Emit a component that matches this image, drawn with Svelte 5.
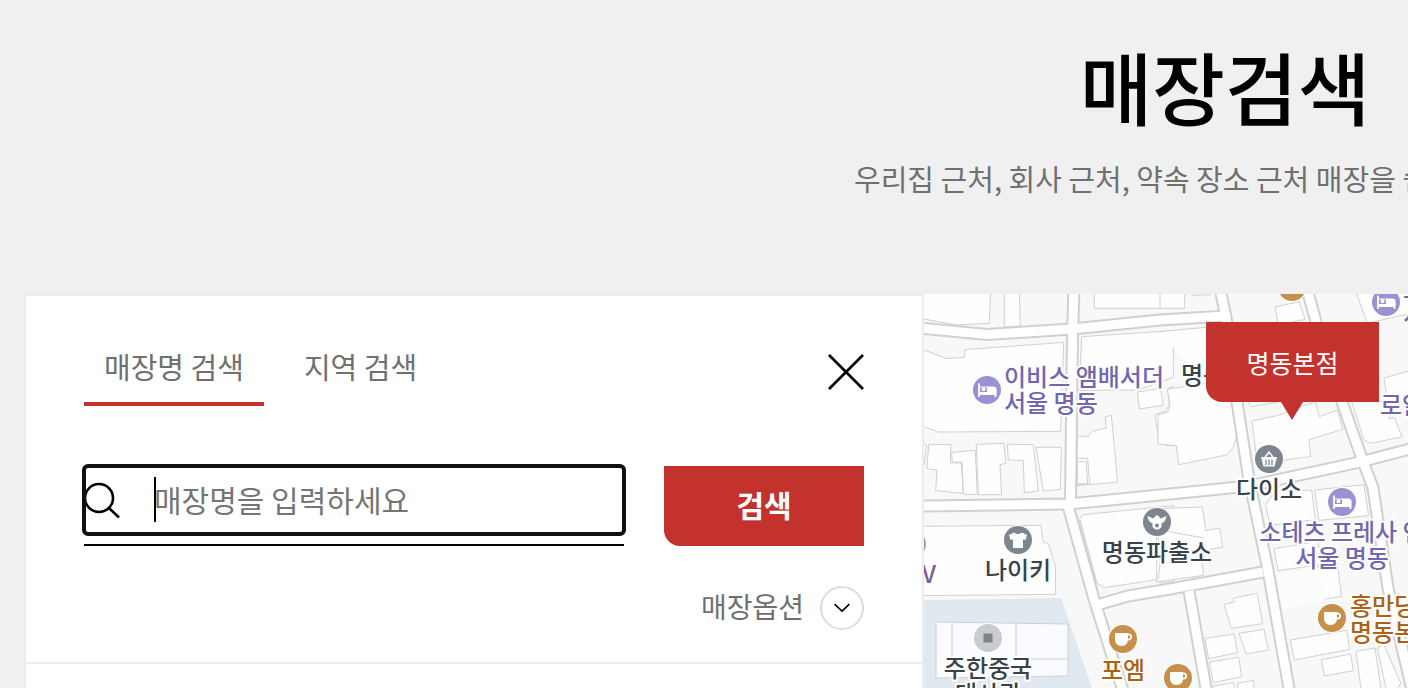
<script lang="ts">
	type Kind = 'bed' | 'basket' | 'shirt' | 'police' | 'cup' | 'square' | 'film';

	let keyword = $state('');
	let activeTab = $state(0);
	const tabs = ['매장명 검색', '지역 검색'];

	function focusOnMount(node: HTMLInputElement) {
		node.focus();
	}

	const roads = [
		'M0 34.5 63 40.5 148 35 236 26 302 22',
		'M150 -5 148.5 40 146.5 209',
		'M-5 212 145 210 196 205 246 200 325 192 436 168 490 154',
		'M296 -5 302 23 313 108 325 186 343 271 366 400',
		'M383 -5 392 28 418 108 437 162 449 194 464 294 488 396',
		'M144 212 170 305 200 400',
		'M173 311 204 302 246 295 339 278',
		'M265 297 283 400'
	];

	// building outlines, drawn at three units to the pixel
	const tiles = [
		{
			x: -4,
			y: -4,
			d: 'M0 85 110 105 208 100 212 0H0zM253 0V111L301 108 298 0zM523 0V55H760V0zM0 175 80 206 134 202V179L431 157 422 424 54 426 0 405zM0 462 20 465 12 525 0 522zM26 463 93 464 91 518 124 519 130 610 47 602 51 540 21 536zM95 487 166 481 172 614 130 612 126 517 97 516zM169 463 252 460 257 520 240 524 245 614H175zM262 463 340 464 355 603 313 608 310 511 265 510zM348 472 424 472 421 598 370 603zM485 140 760 122V262L655 300 478 301zM652 306 658 357 730 346 722 295zM760 290 743 296 748 340 740 362 705 374 718 462 760 468zM473 438 505 440 516 424 559 414 555 381 574 376 593 577 467 587zM470 504 503 506 509 582H470zM472 514 499 516 503 582H472z'
		},
		{
			x: 236,
			y: -4,
			d: 'M0 0V55H74V0zM97 0V16L152 14V0zM-4 125 140 112V280L22 298 30 345 24 366 -6 374V462L49 467 56 524 200 495 220 473 230 440 217 335 140 280M345 51 418 35 435 88 355 105zM590 12 622 100 750 70V0zM276 393 355 376 466 335 478 380 532 360 548 418 447 449 452 500 292 520zM265 335 274 350 355 336zM575 335 612 450 632 460 726 441 704 383 688 386 672 264 750 242V335z'
		},
		{
			x: -4,
			y: 194,
			d: 'M0 115 363 112 370 163 385 166 406 235 407 319 0 323zM478 95 490 80 710 58 760 53V280L722 285 710 275 554 299 530 285z'
		},
		{
			x: 236,
			y: 194,
			d: 'M-10 62 127 57 138 128 179 120 188 178 122 188 131 262 -10 282zM317 50 345 10 455 6 466 95 330 112zM464 6 477 97 626 83 612 -10zM342 182 475 160 482 230 354 248zM474 235 532 225 544 325 491 334zM192 350 223 342 221 330 291 316 308 407 214 421zM135 451 222 438 232 494 146 512zM237 436 312 424 325 486 258 498zM148 522 236 508 245 566 160 584zM391 456 560 427 569 484 403 516zM484 515 572 498 580 548 493 564zM588 490 645 480 664 610H604zM652 480 672 470 722 585 710 610H680zM160 594 220 584 225 610H163zM232 586 280 577 284 610H236z'
		}
	];

	const places: { kind: Kind; x: number; y: number; color: string }[] = [
		{ kind: 'bed', x: 63, y: 96, color: '#9a90d2' },
		{ kind: 'bed', x: 462, y: 8, color: '#9a90d2' },
		{ kind: 'bed', x: 418, y: 208, color: '#9a90d2' },
		{ kind: 'basket', x: 345, y: 165, color: '#7d868e' },
		{ kind: 'shirt', x: 94, y: 246, color: '#7d868e' },
		{ kind: 'police', x: 233, y: 228, color: '#7d868e' },
		{ kind: 'cup', x: 199, y: 345, color: '#c6904a' },
		{ kind: 'cup', x: 254, y: 384, color: '#c6904a' },
		{ kind: 'cup', x: 408, y: 324, color: '#c6904a' },
		{ kind: 'cup', x: 368, y: -7, color: '#c6904a' },
		{ kind: 'square', x: 64, y: 344, color: '#c9cbce' },
		{ kind: 'film', x: -12, y: 250, color: '#b68fc0' }
	];

	const labels = [
		{ x: 80, y: 92, lines: ['이비스 앰배서더', '서울 명동'], tone: 'hotel', anchor: 'start' },
		{ x: 479, y: 4, lines: ['스카이파크', '서울 명동'], tone: 'hotel', anchor: 'start' },
		{ x: 456, y: 120, lines: ['로얄호텔'], tone: 'hotel', anchor: 'start' },
		{ x: 418, y: 247, lines: ['소테츠 프레사 인', '서울 명동'], tone: 'hotel', anchor: 'middle' },
		{ x: 257, y: 90, lines: ['명동성당'], tone: 'plain', anchor: 'start' },
		{ x: 345, y: 204, lines: ['다이소'], tone: 'plain', anchor: 'middle' },
		{ x: 233, y: 267, lines: ['명동파출소'], tone: 'plain', anchor: 'middle' },
		{ x: 94, y: 285, lines: ['나이키'], tone: 'plain', anchor: 'middle' },
		{ x: 64, y: 383, lines: ['주한중국', '대사관'], tone: 'plain', anchor: 'middle' },
		{ x: 199, y: 385, lines: ['포엠'], tone: 'cafe', anchor: 'middle' },
		{ x: 426, y: 321, lines: ['홍만당', '명동본점'], tone: 'cafe', anchor: 'start' },
		{ x: 12, y: 289, lines: ['CGV'], tone: 'cinema', anchor: 'end' }
	];
</script>

<main class="page">
	<header class="page-head">
		<h1>매장검색</h1>
		<p>우리집 근처, 회사 근처, 약속 장소 근처 매장을 쉽게 찾아보세요.</p>
	</header>

	<div class="store">
		<section class="panel">
			<form class="search" onsubmit={(e) => e.preventDefault()}>
				<div class="panel-top">
					<div class="tabs">
						{#each tabs as tab, i}
							<button type="button" class="tab" class:active={activeTab === i} onclick={() => (activeTab = i)}>{tab}</button>
						{/each}
					</div>
					<button type="button" class="close" aria-label="닫기">
						<svg width="36" height="36" viewBox="0 0 36 36" fill="none" stroke="#000" stroke-width="2.700"><path d="M1 1 35 35M35 1 1 35" /></svg>
					</button>
				</div>

				<div class="search-row">
					<div class="field">
						<label class="field-box">
							<svg width="36" height="36" viewBox="0 0 36 36" fill="none" stroke="#000" stroke-width="2.600"><circle cx="15" cy="16" r="14" /><path d="M25 26 35 35.500" /></svg>
							<span class="entry">
								<input type="text" placeholder="매장명을 입력하세요" aria-label="매장명" bind:value={keyword} use:focusOnMount />
								{#if !keyword}<span class="caret"></span>{/if}
							</span>
						</label>
					</div>
					<button type="submit" class="submit">검색</button>
				</div>

				<button type="button" class="option">
					<span class="option-text">매장옵션</span>
					<span class="option-icon">
						<svg width="16" height="10" viewBox="0 0 16 10" fill="none" stroke="#000" stroke-width="1.600"><path d="m.6 1.200 7.400 7 7.400-7" /></svg>
					</span>
				</button>
			</form>
			<div class="results"></div>
		</section>

		<section class="map" aria-label="지도">
			<svg class="map-canvas" width="100%" height="100%">
				<path d="M0 306 137 304 170 400H0z" fill="#e0e8f0" />
				{#each tiles as tile}
					<path class="building" transform="translate({tile.x} {tile.y}) scale(.33333)" d={tile.d} />
				{/each}
				<path class="wall" d="M236 236 280 244M233 213 236 271 234 285M156 226 173 289" />
				<path d="M353 280 395 274 403 305 358 315z" fill="#fbfdfc" />
				<path class="embassy" d="M12 328 144 330V382L12 384z" />
				<path class="wall" d="M28 329V365M92 330V365H144" />
				{#each roads as d}<path class="road-edge" {d} />{/each}
				{#each roads as d}<path class="road" {d} />{/each}

				{#each places as place}
					<g transform="translate({place.x} {place.y})">
						<circle r="15" fill="#fff" />
						<circle r="14" fill={place.color} />
						{#if place.kind === 'bed'}
							<path d="M-8-6.500V7M-8 4H8.500M8.500 7V-1" stroke="#fff" stroke-width="1.800" fill="none" />
							<path d="M-7-3.500H6.500Q9.400-3.500 9.400-1V4H-7z" fill="#fff" />
							<path d="M-7-2.500H0V2H-7z" fill={place.color} />
							<circle cx="-3.500" cy="-.7" r="2" fill="#fff" />
						{:else if place.kind === 'basket'}
							<path d="m-4.500-1 4.500-6 4.500 6" stroke="#fff" stroke-width="1.600" fill="none" />
							<path d="M-8-2H8L5.500 7.500H-5.500z" fill="#fff" />
							<path d="M-3 .5V6M0 .5V6M3 .5V6" stroke={place.color} stroke-width="1.300" />
						{:else if place.kind === 'shirt'}
							<path d="M-4-7.500Q0-4.500 4-7.500L9-5 7.500 0 5-.8V8H-5V-.8L-7.500 0-9-5z" fill="#fff" />
						{:else if place.kind === 'police'}
							<path d="M-9.500-6-3.500-3.500-2-5.500 0-7 2-5.500 3.500-3.500 9.500-6C9-2 7.500 0 4.500 1.500L4.500 5Q0 10.500-4.500 5L-4.500 1.500C-7.500 0-9-2-9.500-6z" fill="#fff" />
							<circle cy="3.500" r="2" fill={place.color} />
						{:else if place.kind === 'cup'}
							<path d="M-8-6H5V0Q5 7-1.500 7-8 7-8 0z" fill="#fff" />
							<circle cx="5.500" cy="-2" r="2.700" fill="none" stroke="#fff" stroke-width="1.800" />
						{:else if place.kind === 'square'}
							<path d="M-4.500-4.500h9v9h-9z" fill="#7d868e" />
						{/if}
					</g>
				{/each}

				{#each labels as label}
					<text class="label {label.tone}" text-anchor={label.anchor}>
						{#each label.lines as line, i}
							<tspan x={label.x} y={label.y + i * 26}>{line}</tspan>
						{/each}
					</text>
				{/each}
			</svg>
			<a class="marker" href="#store">명동본점</a>
		</section>
	</div>
</main>

<style>
	:global(body) {
		margin: 0;
		overflow: hidden;
		background: #f0f0f0;
	}
	.page {
		display: flex;
		flex-direction: column;
		min-height: 100vh;
		overflow: hidden;
		font-family: 'Noto Sans CJK KR', 'Noto Sans', sans-serif;
		color: #000;
	}
	button, input { font-family: inherit; }
	button {
		padding: 0;
		border: 0;
		background: none;
		cursor: pointer;
	}
	svg { display: block; flex-shrink: 0; }

	.page-head {
		box-sizing: border-box;
		height: 294px;
		padding: 26px 0 0 854px;
		white-space: nowrap;
	}
	h1 {
		width: 742px;
		margin: 0;
		font-size: 79px;
		font-weight: 500;
		line-height: 120px;
		text-align: center;
	}
	.page-head p {
		margin: 10px 0 0;
		font-size: 29px;
		line-height: 44px;
		color: #707070;
	}

	.store {
		display: flex;
		flex: 1;
		padding-left: 24px;
	}
	.panel {
		display: flex;
		flex-direction: column;
		box-sizing: border-box;
		width: 900px;
		flex-shrink: 0;
		border: 2px solid #ececec;
		border-bottom: 0;
		background: #fff;
	}
	.search {
		padding: 42px 58px 32px;
		border-bottom: 2px solid #ececec;
	}
	.results { flex: 1; }

	.panel-top {
		display: flex;
		justify-content: space-between;
		align-items: center;
	}
	.tabs { display: flex; gap: 20px; }
	.tab {
		padding: 8px 20px 16px;
		border-bottom: 4px solid transparent;
		font-size: 29px;
		line-height: 40px;
		color: #707070;
	}
	.tab.active { border-bottom-color: #c3322c; }

	.search-row {
		display: flex;
		justify-content: space-between;
		gap: 40px;
		margin-top: 60px;
	}
	.field {
		flex: 1;
		height: 78px;
		border-bottom: 2px solid #000;
	}
	.field-box {
		display: flex;
		align-items: center;
		gap: 34px;
		height: 68px;
		border-radius: 4px;
		outline: 4px solid #101010;
		outline-offset: -2px;
	}
	.entry {
		position: relative;
		display: flex;
		flex: 1;
	}
	.entry input {
		flex: 1;
		min-width: 0;
		height: 60px;
		padding: 0 0 2px;
		border: 0;
		outline: 0;
		background: none;
		font-size: 30px;
		color: #000;
	}
	.entry input:placeholder-shown { caret-color: transparent; }
	.entry input::placeholder { color: #757575; opacity: 1; }
	.caret {
		position: absolute;
		left: 0;
		top: 8px;
		width: 2px;
		height: 45px;
		background: #000;
		pointer-events: none;
	}
	.submit {
		width: 200px;
		height: 80px;
		padding-bottom: 4px;
		border-bottom-left-radius: 16px;
		background: #c3322c;
		font-size: 30px;
		font-weight: 700;
		color: #fff;
	}

	.option {
		display: flex;
		align-items: center;
		gap: 16px;
		margin: 40px 0 0 auto;
		font-size: 28px;
		line-height: 40px;
		color: #707070;
	}
	.option-text { padding-bottom: 4px; }
	.option-icon {
		display: grid;
		place-items: center;
		box-sizing: border-box;
		width: 44px;
		height: 44px;
		border: 2px solid #ddd;
		border-radius: 50%;
	}

	.map {
		position: relative;
		flex: 1;
		min-width: 0;
		overflow: hidden;
		background: #f8f8f8;
	}
	.map-canvas { position: absolute; inset: 0; }
	.building {
		fill: #fefefe;
		stroke: #d0d0d0;
		stroke-width: 3;
	}
	.wall {
		fill: none;
		stroke: #d0d0d0;
	}
	.embassy {
		fill: #f9fbfe;
		stroke: #d0d0d0;
	}
	.road-edge {
		fill: none;
		stroke: #d0d0d0;
		stroke-width: 13;
	}
	.road {
		fill: none;
		stroke: #fff;
		stroke-width: 9;
	}
	.label {
		font-size: 24px;
		font-weight: 500;
		paint-order: stroke;
		stroke: #fff;
		stroke-width: 4;
		stroke-linejoin: round;
	}
	.hotel { fill: #7167b0; }
	.plain { fill: #394249; }
	.cafe { fill: #ab6215; }
	.cinema { fill: #845a9b; }

	.marker {
		position: absolute;
		left: 282px;
		top: 28px;
		width: 173px;
		border-bottom-left-radius: 16px;
		background: #c3322c;
		font-size: 25px;
		line-height: 80px;
		text-align: center;
		text-decoration: none;
		color: #fff;
	}
	.marker::after {
		content: '';
		position: absolute;
		left: 75px;
		top: 80px;
		border: 11px solid transparent;
		border-top: 18px solid #c3322c;
		border-bottom: 0;
	}
</style>
